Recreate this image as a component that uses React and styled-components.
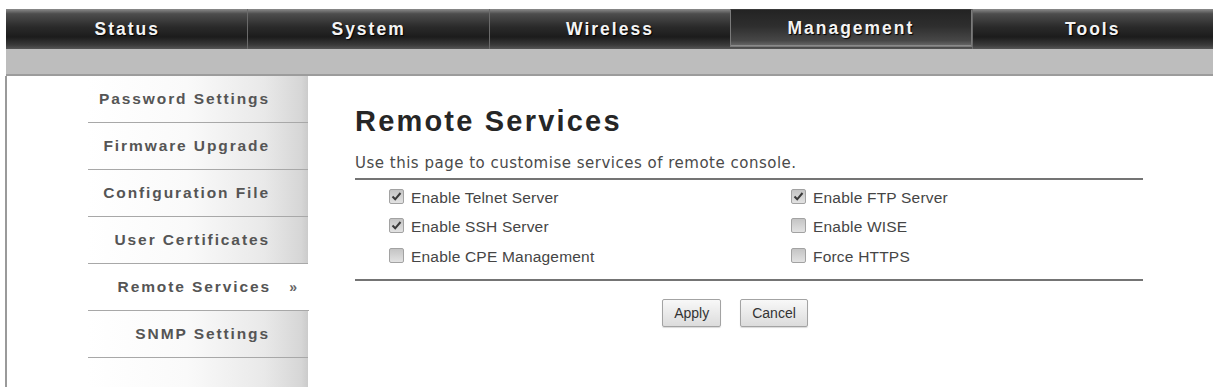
import styled, { createGlobalStyle } from "styled-components";

const GlobalStyle = createGlobalStyle`
  html, body {
    margin: 0;
    background: #ffffff;
  }
  body {
    font-family: "Liberation Sans", Arial, sans-serif;
  }
`;

const Page = styled.div`
  padding: 9px 2px 0 6px;
  height: 378px;
  display: flex;
  flex-direction: column;
`;

const NavBar = styled.div`
  display: grid;
  grid-template-columns: repeat(5, 1fr);
  height: 40px;
  background: linear-gradient(#8c8c8c 0%, #4d4d4d 12%, #2a2a2a 45%, #1c1c1c 70%, #3a3a3a 90%, #565656 100%);
`;

const Tab = styled.div`
  display: flex;
  align-items: center;
  justify-content: center;
  color: #f4f4f4;
  font-size: 17.5px;
  font-weight: bold;
  letter-spacing: 2px;
  text-shadow: 1px 1px 1px #000;
  border-left: 1px solid ${(p) => (p.$first ? "transparent" : "#6a6a6a")};
  box-sizing: border-box;
  ${(p) =>
    p.$active &&
    `
    margin-bottom: 2px;
    border: 1px solid #7a7a7a;
    border-top-color: #3a3a3a;
    background: linear-gradient(#232323 0%, #2e2e2e 45%, #474747 85%, #6a6a6a 100%);
    box-shadow: inset 0 -1px 0 #8a8a8a;
  `}
`;

const SubBar = styled.div`
  height: 25px;
  background: #bdbdbd;
  border-bottom: 2px solid #9c9c9c;
`;

const Body = styled.div`
  flex: 1;
  display: flex;
  margin-left: -1px;
  border-left: 2px solid #9a9a9a;
`;

const Sidebar = styled.div`
  width: 301px;
  padding-left: 81px;
  box-sizing: border-box;
`;

const Menu = styled.div`
  height: 100%;
  background: linear-gradient(to right, #ffffff 0%, #fafafa 45%, #e9e9e9 80%, #d6d6d6 97%, #cbcbcb 100%);
`;

const MenuItem = styled.div`
  position: relative;
  height: 46px;
  border-bottom: 1px solid #a8a8a8;
  display: flex;
  align-items: center;
  justify-content: flex-end;
  padding-right: 38px;
  color: #555555;
  font-size: 15.5px;
  font-weight: bold;
  letter-spacing: 1.9px;
  background: ${(p) => (p.$active ? "#ffffff" : "transparent")};
  margin-right: ${(p) => (p.$active ? "-1px" : "0")};
`;

const Arrows = styled.span`
  position: absolute;
  right: 12px;
  font-size: 14px;
  letter-spacing: 0;
  color: #666;
`;

const Main = styled.div`
  flex: 1;
  padding: 28px 0 0 47px;
`;

const Content = styled.div`
  width: 788px;
`;

const Heading = styled.h1`
  margin: 0;
  font-size: 29px;
  line-height: 34px;
  letter-spacing: 2.2px;
  font-weight: bold;
  color: #262626;
`;

const Description = styled.p`
  margin: 16px 0 0;
  font-family: "DejaVu Sans", Verdana, sans-serif;
  font-size: 15px;
  line-height: 18px;
  letter-spacing: 0.5px;
  color: #4a4a4a;
`;

const Options = styled.div`
  margin-top: 6px;
  border-top: 2px solid #747474;
  border-bottom: 2px solid #747474;
  padding: 3px 0 7px 34px;
  display: grid;
  grid-template-columns: 402px 1fr;
  grid-auto-rows: 29.5px;
`;

const Option = styled.label`
  display: flex;
  align-items: center;
  gap: 7px;
  font-size: 15.5px;
  letter-spacing: 0.2px;
  color: #454545;
`;

const Box = styled.span`
  width: 13px;
  height: 13px;
  border: 1px solid #a2a2a2;
  border-radius: 2px;
  background: linear-gradient(#c4c4c4, #e2e2e2);
  display: flex;
  align-items: center;
  justify-content: center;
  margin-top: -3px;
`;

const Actions = styled.div`
  display: flex;
  justify-content: center;
  gap: 19px;
  margin-top: 18px;
  padding-right: 28px;
`;

const Button = styled.button`
  height: 28px;
  padding: 0 11px;
  font-family: "Liberation Sans", Arial, sans-serif;
  font-size: 14px;
  color: #333;
  background: linear-gradient(#f8f8f8, #dcdcdc);
  border: 1px solid #a3a3a3;
  border-radius: 2px;
  box-shadow: 0 1px 1px rgba(0, 0, 0, 0.15);
`;

const Check = () => (
  <svg width="11" height="11" viewBox="0 0 11 11">
    <path d="M1.5 5.5 L4.2 8.3 L9.5 2" fill="none" stroke="#3a3a3a" strokeWidth="2" />
  </svg>
);

const CheckOption = ({ checked, children }) => (
  <Option>
    <Box>{checked && <Check />}</Box>
    {children}
  </Option>
);

const tabs = ["Status", "System", "Wireless", "Management", "Tools"];
const menu = [
  "Password Settings",
  "Firmware Upgrade",
  "Configuration File",
  "User Certificates",
  "Remote Services",
  "SNMP Settings",
];

const App = () => {
  return (
    <>
      <GlobalStyle />
      <Page>
        <NavBar>
          {tabs.map((t, i) => (
            <Tab key={t} $first={i === 0} $active={t === "Management"}>
              {t}
            </Tab>
          ))}
        </NavBar>
        <SubBar />
        <Body>
          <Sidebar>
            <Menu>
              {menu.map((m) => (
                <MenuItem key={m} $active={m === "Remote Services"}>
                  {m}
                  {m === "Remote Services" && <Arrows>»</Arrows>}
                </MenuItem>
              ))}
            </Menu>
          </Sidebar>
          <Main>
            <Content>
              <Heading>Remote Services</Heading>
              <Description>Use this page to customise services of remote console.</Description>
              <Options>
                <CheckOption checked>Enable Telnet Server</CheckOption>
                <CheckOption checked>Enable FTP Server</CheckOption>
                <CheckOption checked>Enable SSH Server</CheckOption>
                <CheckOption>Enable WISE</CheckOption>
                <CheckOption>Enable CPE Management</CheckOption>
                <CheckOption>Force HTTPS</CheckOption>
              </Options>
              <Actions>
                <Button>Apply</Button>
                <Button>Cancel</Button>
              </Actions>
            </Content>
          </Main>
        </Body>
      </Page>
    </>
  );
};

export default App;
